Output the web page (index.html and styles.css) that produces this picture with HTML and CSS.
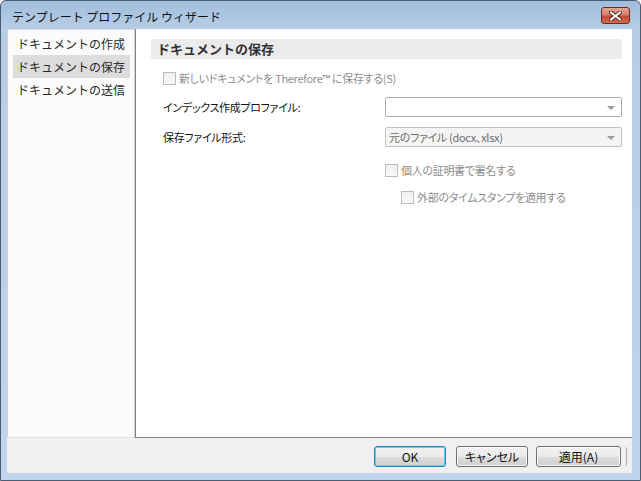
FILE: index.html
```html
<!DOCTYPE html>
<html lang="ja">
<head>
  <meta charset="UTF-8" />
  <title>テンプレート プロファイル ウィザード</title>
  <link rel="stylesheet" href="styles.css">
</head>
<body>
  <div class="window">
    <div class="titlebar">
      <span class="title">テンプレート プロファイル ウィザード</span>
      <div class="close">
        <svg width="13" height="10" viewBox="0 0 13 10">
          <path d="M2 1.5 L11 8.5 M11 1.5 L2 8.5" stroke="#4a2020" stroke-width="4" stroke-linecap="square"/>
          <path d="M2 1.5 L11 8.5 M11 1.5 L2 8.5" stroke="#ffffff" stroke-width="2" stroke-linecap="square"/>
        </svg>
      </div>
    </div>

    <div class="client">
      <div class="panes">
        <ul class="nav">
          <li>ドキュメントの作成</li>
          <li class="selected">ドキュメントの保存</li>
          <li>ドキュメントの送信</li>
        </ul>

        <div class="content">
          <div class="section-title">ドキュメントの保存</div>

          <div class="check-row first disabled">
            <span class="box"></span>
            <span>新しいドキュメントを Therefore™ に保存する(S)</span>
          </div>

          <div class="field-row first">
            <label>インデックス作成プロファイル:</label>
            <div class="combo"><span class="value"></span><span class="arrow"></span></div>
          </div>

          <div class="field-row">
            <label>保存ファイル形式:</label>
            <div class="combo disabled"><span class="value">元のファイル (docx、xlsx)</span><span class="arrow"></span></div>
          </div>

          <div class="check-row sign disabled">
            <span class="box"></span>
            <span>個人の証明書で署名する</span>
          </div>

          <div class="check-row stamp disabled">
            <span class="box"></span>
            <span>外部のタイムスタンプを適用する</span>
          </div>
        </div>
      </div>

      <div class="buttons">
        <button class="btn default">OK</button>
        <button class="btn cancel">キャンセル</button>
        <button class="btn apply">適用(A)</button>
        <span class="clipped"></span>
      </div>
    </div>
  </div>
</body>
</html>
```

FILE: styles.css
```css
html, body {
  margin: 0;
  padding: 0;
}
body {
  width: 641px;
  height: 481px;
  overflow: hidden;
  font-family: "Noto Sans CJK JP", "Noto Sans", sans-serif;
  font-size: 12px;
  color: #1e1e1e;
}
.window {
  box-sizing: border-box;
  width: 641px;
  height: 481px;
  border: 1px solid #4b5d73;
  border-radius: 6px 6px 0 0;
  background: linear-gradient(to bottom, #a2bedd 0px, #b6cde6 28px, #c0d5ec 100%);
  padding: 0 8px 7px 6px;
  display: flex;
  flex-direction: column;
}
.titlebar {
  height: 28px;
  flex: none;
  display: flex;
  align-items: center;
  justify-content: space-between;
}
.title {
  margin-left: 5px;
  margin-top: 2px;
  font-size: 12px;
  color: #111;
}
.close {
  width: 27px;
  height: 15px;
  margin-top: 1px;
  margin-right: 2px;
  border: 1px solid #6b2a22;
  border-radius: 3px;
  background: linear-gradient(to bottom, #e4a593 0%, #d8806b 45%, #c44a32 55%, #d36a4d 100%);
  display: flex;
  align-items: center;
  justify-content: center;
}
.close svg {
  display: block;
}

.client {
  flex: 1;
  display: flex;
  flex-direction: column;
  background: #f0f0f0;
}
.panes {
  height: 409px;
  display: flex;
}
.nav {
  list-style: none;
  margin: 0;
  box-sizing: border-box;
  width: 128px;
  padding: 2px 4px 0 5px;
  background: #fbfbfb;
  border-left: 1px solid #d2d2d2;
  border-top: 1px solid #d8d8d8;
  border-right: 1px solid #cfcfcf;
  border-bottom: 1px solid #e0e0e0;
}
.nav li {
  height: 23px;
  line-height: 23px;
  padding-left: 4px;
  font-size: 12px;
  color: #2a2a2a;
  white-space: nowrap;
}
.nav li.selected {
  background: #dcdcdc;
}
.content {
  flex: 1;
  background: #ffffff;
  border-left: 1px solid #83838f;
  border-bottom: 1px solid #83838f;
  padding: 10px 10px 0 15px;
  font-size: 11px;
  letter-spacing: -0.3px;
  font-feature-settings: "palt";
}
.section-title {
  height: 20px;
  line-height: 20px;
  background: #ebebeb;
  padding-left: 6px;
  font-size: 13px;
  font-weight: bold;
  letter-spacing: 0;
  color: #333;
  font-feature-settings: normal;
}
.check-row {
  display: flex;
  align-items: center;
  height: 13px;
  line-height: 13px;
  white-space: nowrap;
}
.check-row.first {
  margin-top: 13px;
  padding-left: 12px;
}
.check-row.sign {
  margin-top: 17px;
  padding-left: 234px;
}
.check-row.stamp {
  margin-top: 14px;
  padding-left: 250px;
}
.check-row.disabled {
  color: #8d8d8d;
}
.box {
  box-sizing: border-box;
  width: 13px;
  height: 13px;
  margin-right: 3px;
  border: 1px solid #bdbdbd;
  background: linear-gradient(to bottom, #f0f0f0, #f8f8f8);
  flex: none;
}
.field-row {
  display: grid;
  grid-template-columns: 222px 1fr;
  align-items: center;
  margin-top: 10px;
  padding-left: 12px;
}
.field-row.first {
  margin-top: 12px;
}
.field-row label {
  white-space: nowrap;
  color: #111;
}
.combo {
  box-sizing: border-box;
  height: 20px;
  border: 1px solid #adadad;
  border-radius: 2px;
  background: #ffffff;
  display: flex;
  align-items: center;
  justify-content: space-between;
  padding: 0 6px 0 3px;
}
.combo.disabled {
  background: #f4f4f4;
  border-color: #c3c3c3;
  color: #6d6d6d;
}
.arrow {
  width: 0;
  height: 0;
  border-left: 4px solid transparent;
  border-right: 4px solid transparent;
  border-top: 4px solid #9a9a9a;
  margin-top: 1px;
}

.buttons {
  flex: 1;
  display: flex;
  justify-content: flex-end;
  align-items: flex-start;
  padding: 8px 5px 0 0;
}
.btn {
  box-sizing: border-box;
  height: 21px;
  padding: 0;
  font-family: inherit;
  font-size: 12px;
  font-feature-settings: "palt";
  color: #111;
  border: 1px solid #707070;
  border-radius: 3px;
  background: linear-gradient(to bottom, #f2f2f2 0%, #ebebeb 50%, #dddddd 51%, #cfcfcf 100%);
  box-shadow: inset 0 0 0 1px #fbfbfb;
}
.btn.default {
  width: 72px;
  border-color: #3c7fb1;
  box-shadow: inset 0 0 0 1px #48d8fb;
}
.btn.cancel {
  width: 72px;
  margin-left: 10px;
}
.btn.apply {
  width: 85px;
  margin-left: 8px;
}
.clipped {
  width: 2px;
  height: 19px;
  margin-left: 3px;
  margin-top: 1px;
  border-right: 1px solid #a8a8a8;
  border-radius: 0 2px 2px 0;
}
```
